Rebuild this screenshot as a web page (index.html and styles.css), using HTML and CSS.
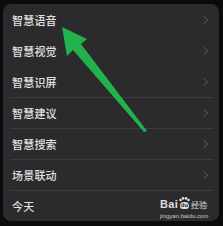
FILE: index.html
```html
<!DOCTYPE html>
<html lang="zh-CN">
<head>
<meta charset="utf-8">
<title>设置</title>
<link rel="stylesheet" href="styles.css">
</head>
<body>
<div class="card">
  <div class="row"><span class="label">智慧语音</span><span class="chev"></span></div>
  <div class="row"><span class="label">智慧视觉</span><span class="chev"></span></div>
  <div class="row"><span class="label">智慧识屏</span><span class="chev"></span></div>
  <div class="row sep"><span class="label">智慧建议</span><span class="chev"></span></div>
  <div class="row sep"><span class="label">智慧搜索</span><span class="chev"></span></div>
  <div class="row sep"><span class="label">场景联动</span><span class="chev"></span></div>
  <div class="row sep"><span class="label">今天</span><span class="chev"></span></div>
</div>
<svg class="arrow" width="223" height="226" viewBox="0 0 223 226">
  <polygon points="62,27 87,39 81,44 147,131 144,132 73,50 67,56" fill="#22b24c"/>
</svg>
<div class="mark">
  <div class="mark-top">
    <span class="bai">Bai</span>
    <span class="pawbox">
      <svg class="toes" width="11" height="5" viewBox="0 0 11 5">
        <circle cx="1.5" cy="3" r="1.3" fill="rgba(255,255,255,0.85)"/>
        <circle cx="4" cy="1.4" r="1.3" fill="rgba(255,255,255,0.85)"/>
        <circle cx="7" cy="1.4" r="1.3" fill="rgba(255,255,255,0.85)"/>
        <circle cx="9.5" cy="3" r="1.3" fill="rgba(255,255,255,0.85)"/>
      </svg>
      <span class="paw">du</span>
    </span>
    <span class="jy">经验</span>
  </div>
  <div class="mark-url">jingyan.baidu.com</div>
</div>
</body>
</html>
```

FILE: styles.css
```css
html, body {
  margin: 0;
  padding: 0;
  background: #0b0b0b;
  width: 223px;
  height: 226px;
  overflow: hidden;
  font-family: "Noto Sans CJK SC", "Noto Sans", sans-serif;
}
.card {
  margin: 4px 4px 0 3px;
  width: 216px;
  height: 217px;
  background: #2b2b2d;
  border-radius: 8px;
  display: flex;
  flex-direction: column;
}
.row {
  height: 31px;
  margin: 0 6px 0 7px;
  padding: 0 2px 0 2px;
  display: flex;
  align-items: center;
  justify-content: space-between;
  box-sizing: border-box;
}
.row.sep {
  border-top: 1px solid #3c3c3e;
}
.label {
  color: #e0e0e0;
  font-size: 11px;
  font-weight: 500;
  letter-spacing: 0.2px;
}
.chev {
  width: 5px;
  height: 5px;
  border-top: 1.2px solid #525254;
  border-right: 1.2px solid #525254;
  transform: rotate(45deg);
  margin-right: 4px;
}
.arrow {
  position: absolute;
  left: 0;
  top: 0;
}
.mark {
  position: absolute;
  left: 160px;
  top: 196px;
  color: rgba(255,255,255,0.85);
  font-family: "Liberation Sans", Arial, sans-serif;
}
.mark-top {
  display: flex;
  align-items: flex-end;
  height: 14px;
  line-height: 12px;
}
.bai {
  font-size: 11px;
  font-weight: bold;
  letter-spacing: 0.3px;
}
.pawbox {
  display: flex;
  flex-direction: column;
  align-items: center;
  margin: 0 1px 1px 1px;
}
.toes {
  display: block;
}
.paw {
  font-size: 6px;
  font-weight: bold;
  background: rgba(255,255,255,0.85);
  color: #2b2b2d;
  border-radius: 4px 4px 3px 3px;
  height: 7px;
  line-height: 7px;
  padding: 0 1px;
}
.jy {
  font-family: "Noto Sans CJK SC", sans-serif;
  font-size: 8px;
  line-height: 10px;
}
.mark-url {
  font-size: 6px;
  line-height: 8px;
  margin-top: 2px;
  color: rgba(255,255,255,0.75);
}
```
